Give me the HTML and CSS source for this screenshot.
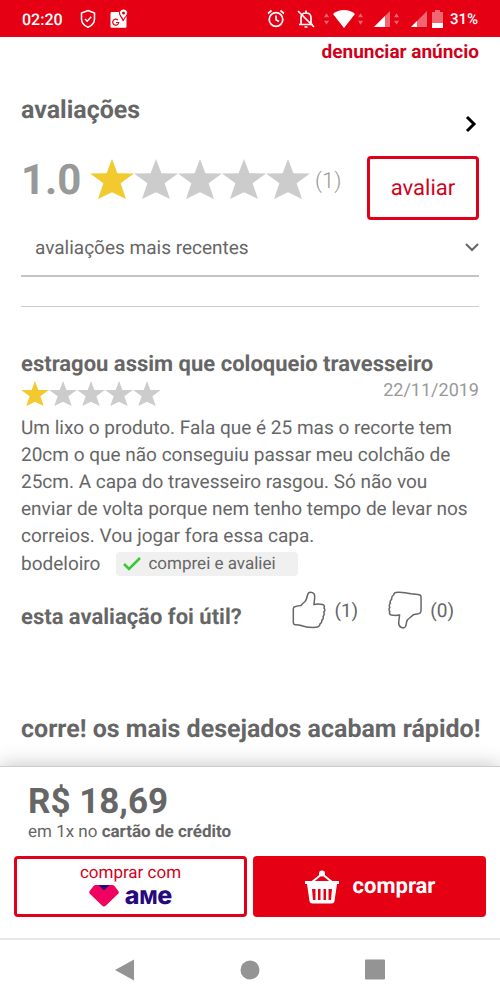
FILE: index.html
```html
<!DOCTYPE html>
<html lang="pt-BR">
<head>
<meta charset="utf-8">
<meta name="viewport" content="width=device-width, initial-scale=1">
<title>avaliações</title>
<link rel="stylesheet" href="styles.css">
</head>
<body>
<svg class="defs" aria-hidden="true">
  <symbol id="star" viewBox="0 0 44 40"><path d="M22 0l5.4 14.2L44 14.5 30.6 24.2 36 40 22 33.2 8 40l5.400-15.800L0 14.500l16.600-.300z"/></symbol>
  <symbol id="updown" viewBox="0 0 6 14"><path d="M3 0l3 5H0zM3 14l3-5H0z"/></symbol>
</svg>

<div class="status">
  <span class="clock">02:20</span>
  <svg class="shield" width="16" height="20" viewBox="0 0 16 20"><path d="M8 1.500l6.500 2.500v6c0 4-2.800 6.800-6.500 8.300C4.300 16.800 1.500 14 1.500 10V4z"/><path d="M5 10l2.200 2.200 4-4.400"/></svg>
  <svg class="maps" width="18" height="20" viewBox="0 0 18 20">
    <path d="M2 3h7c0 4 2.500 6 4 9.500 1-2.500 2-4 3.500-5.500v10.500c0 .8-.5 1.300-1.300 1.300H2C1 18.800.5 18.300.5 17.500v-13C.5 3.500 1 3 2 3z"/>
    <path class="pin" d="M13.500 0C11.300 0 9.500 1.800 9.500 3.800c0 3 3.100 4.200 4 7.700.9-3.500 4-4.700 4-7.700C17.500 1.800 15.700 0 13.500 0z"/><circle class="hole" cx="13.500" cy="4" r="1.500"/>
    <path class="g" d="M8 11.200a3 3 0 1 0 .7 2.300H6"/>
  </svg>
  <div class="status-right">
    <svg class="line-icon" width="18" height="20" viewBox="0 0 18 20"><circle cx="9" cy="10.500" r="6.800"/><path d="M9 6.500v4.300l3 1.800M1 4.500L4.500 1.500M17 4.500l-3.500-3"/></svg>
    <svg class="line-icon bell" width="20" height="20" viewBox="0 0 20 20"><path d="M5 15V9c0-3 2-5 5-5s5 2 5 5v6M3 15.500h14M10 4V1.500M8.500 18h3M2 2l16 16"/></svg>
    <svg class="faint" width="5" height="14"><use href="#updown"/></svg>
    <svg class="wifi" width="22" height="18" viewBox="0 0 22 18"><path d="M0 4C6-1.300 16-1.300 22 4L11 18z"/></svg>
    <svg class="faint" width="5" height="14"><use href="#updown"/></svg>
    <svg class="signal" width="16" height="16" viewBox="0 0 16 16"><path class="dim" d="M16 0v16H0z"/><path d="M11 5v11H0z"/></svg>
    <svg class="faint near" width="5" height="14"><use href="#updown"/></svg>
    <svg class="signal" width="16" height="16" viewBox="0 0 16 16"><path class="dim" d="M16 0v16H0z"/><path d="M6 10v6H0z"/></svg>
    <svg class="battery" width="11" height="18" viewBox="0 0 11 18"><path class="dim" d="M3 0h5v2h3v16H0V2h3z"/><path d="M0 13h11v5H0z"/></svg>
    <span class="percent">31%</span>
  </div>
</div>

<main class="content">
  <a class="report" href="#">denunciar anúncio</a>

  <section>
    <div class="heading">
      <h2>avaliações</h2>
      <a class="more" href="#" aria-label="ver avaliações"><svg width="12" height="18" viewBox="0 0 12 18"><path d="M2 2l7 7-7 7"/></svg></a>
    </div>
    <div class="summary">
      <span class="score">1.0</span>
      <div class="stars large" role="img" aria-label="1 de 5 estrelas">
        <svg class="on"><use href="#star"/></svg><svg><use href="#star"/></svg><svg><use href="#star"/></svg><svg><use href="#star"/></svg><svg><use href="#star"/></svg>
      </div>
      <span class="count">(1)</span>
      <button class="rate" type="button">avaliar</button>
    </div>
    <div class="sort">
      <select aria-label="ordenar avaliações"><option>avaliações mais recentes</option></select>
      <svg width="14" height="9" viewBox="0 0 14 9"><path d="M1 1l6 6 6-6"/></svg>
    </div>
  </section>

  <article class="review">
    <h3>estragou assim que coloqueio travesseiro</h3>
    <div class="meta">
      <div class="stars small" role="img" aria-label="1 de 5 estrelas">
        <svg class="on"><use href="#star"/></svg><svg><use href="#star"/></svg><svg><use href="#star"/></svg><svg><use href="#star"/></svg><svg><use href="#star"/></svg>
      </div>
      <time datetime="2019-11-22">22/11/2019</time>
    </div>
    <p class="text">Um lixo o produto. Fala que é 25 mas o recorte tem 20cm o que não conseguiu passar meu colchão de 25cm. A capa do travesseiro rasgou. Só não vou enviar de volta porque nem tenho tempo de levar nos correios. Vou jogar fora essa capa.</p>
    <div class="author">
      <span>bodeloiro</span>
      <span class="badge"><svg width="18" height="14" viewBox="0 0 18 14"><path d="M1 7l5 5L17 1"/></svg>comprei e avaliei</span>
    </div>
    <div class="useful">
      <h3>esta avaliação foi útil?</h3>
      <div class="votes">
        <button type="button" aria-label="útil (1)"><svg width="34" height="38" viewBox="0 0 34 38"><path d="M2 16c3-1 5-1.500 7-1.500 1-1.500 2.500-2.800 4-4 1.500-1.500 2-4 2.500-6.500C16 2 17 1.200 18.500 1.200c3 0 4.300 1.800 4.200 4.800 0 3-.7 5-.7 7.500 3-.8 6-.5 8.500 0 1.800.5 2.300 2 1.500 3.500 1 1.300 1 3-.3 4.200.8 1.500.5 3-.6 4.200.5 1.500 0 3-1.300 4 .2 1.500-.5 2.800-1.800 3.600-.3 2-1.500 3.200-4 3.300-5 .3-11-.3-15-1.800-2-.7-4-.7-6-.8-1-.2-1.700-1-1.700-2.200V18.500C1.300 17.300 1.500 16.500 2 16z"/></svg>(1)</button>
        <button type="button" aria-label="não útil (0)"><svg width="34" height="38" viewBox="0 0 34 38"><path d="M5.500 4C6 2 7 1.200 9 1.200c5-.3 10 .5 14 1.500 3 .6 5.500.6 8 1 1.400.2 2 1 2 2.300 0 5 .3 10-.1 14.500-.1 1.500-1 2-2.500 2.300-2 .3-4 .7-5.500 1.200-1.500 2-4 3-5.500 5-1.300 2-.8 4.500-1.900 6.500-.8 1.400-2.500 1.600-4 1-2-.7-2.800-2-2.800-4.500 0-2.800.7-5 .8-8-3 .7-6 .5-8.200 0C1.500 23.500 1 22 1.800 20.500.8 19.300.8 17.800 1.800 16.500 1 15 1.200 13.500 2.300 12.300 1.800 10.800 2.300 9.300 3.600 8.300 3.500 6.500 4 5 5.500 4z"/></svg>(0)</button>
      </div>
    </div>
  </article>

  <h2 class="wanted">corre! os mais desejados acabam rápido!</h2>
</main>

<footer class="buy">
  <div class="price">R$ 18,69</div>
  <div class="terms">em 1x no <b>cartão de crédito</b></div>
  <div class="actions">
    <button class="ame" type="button">
      <span>comprar com</span>
      <span class="brand">
        <svg width="30" height="22" viewBox="0 0 30 22"><path class="pink" d="M7 0h16c1 0 2 .4 2.700 1.200l3.600 4.800c.8 1 .7 2-.1 2.800L17 20.500c-1.300 1.300-2.700 1.300-4 0L.8 8.800C0 8 0 7 .7 6l3.600-4.800C5 .4 6 0 7 0z"/><path class="navy" d="M9.500 0h11L16 4.500c-.7.600-1.300.600-2 0z"/></svg>
        <span class="wordmark">a<span class="mid">M</span>e</span>
      </span>
    </button>
    <button class="cart" type="button">
      <svg width="36" height="34" viewBox="0 0 36 34"><path class="handle" d="M8 12L18 4l10 8"/><circle cx="18" cy="3.500" r="3"/><path fill-rule="evenodd" d="M1 11h34v3h-2l-2.500 17c-.3 1.700-1.200 2.500-3 2.500h-19c-1.800 0-2.700-.8-3-2.500L3 14H1zM8 19l1 11h2.500V19zM14 19v11h2.500V19zM19.500 19v11H22V19zM24.500 19v11H27l1-11z"/></svg>
      comprar
    </button>
  </div>
</footer>

<nav class="system">
  <button type="button" aria-label="voltar"><svg width="22" height="24" viewBox="0 0 22 24"><path d="M20 1.500v21L1 12z"/></svg></button>
  <button type="button" aria-label="início"><svg width="22" height="24" viewBox="0 0 22 24"><circle cx="11" cy="12" r="9.500"/></svg></button>
  <button type="button" aria-label="recentes"><svg width="22" height="24" viewBox="0 0 22 24"><rect x="1" y="1.500" width="20" height="20" rx="1"/></svg></button>
</nav>
</body>
</html>
```
FILE: styles.css
```css
* { box-sizing: border-box; }
body {
  margin: 0;
  min-height: 100vh;
  display: flex;
  flex-direction: column;
  background: #fff;
  color: #666;
  font-family: Roboto, "Liberation Sans", sans-serif;
  font-size: 19px;
  line-height: 27px;
  text-rendering: geometricPrecision;
}
button, select { font: inherit; color: inherit; background: none; border: 0; padding: 0; margin: 0; text-rendering: inherit; }
a { text-decoration: none; }
h2, h3, p { margin: 0; }
svg { display: block; flex: none; }
.defs { position: absolute; width: 0; height: 0; }

.status {
  display: flex;
  align-items: center;
  height: 37px;
  padding: 0 22px;
  background: #e60014;
  color: #fff;
  fill: #fff;
  font-size: 16px;
  font-weight: 500;
}
.clock, .percent { padding-top: 2px; }
.shield { margin-left: 17px; fill: none; stroke: #fff; stroke-width: 1.5; }
.maps { margin-left: 14px; }
.maps .pin { stroke: #e60014; stroke-width: 1; }
.maps .hole { fill: #e60014; }
.maps .g { fill: none; stroke: #e60014; stroke-width: 1.2; }
.status-right { display: flex; align-items: center; margin-left: auto; }
.line-icon { fill: none; stroke: #fff; stroke-width: 1.700; }
.bell { margin: 0 8px 0 11px; }
.faint { opacity: .4; }
.wifi { margin: 0 3px 0 4px; }
.signal { margin-left: 11px; }
.near { margin: 0 1px 0 4px; }
.dim { opacity: .4; }
.battery { margin: 0 7px 0 5px; }
.percent { font-size: 15px; }

.content { flex: 1; padding: 1px 21px 0; }
.report {
  display: block;
  text-align: right;
  color: #d0021b;
  font-weight: 700;
}
.heading {
  display: flex;
  justify-content: space-between;
  padding-top: 32px;
  height: 82px;
}
h2 { font-size: 25px; line-height: 28px; font-weight: 700; }
.more { align-self: flex-end; padding: 0 2px 14px; }
.more svg { fill: none; stroke: #000; stroke-width: 3; }
.summary { display: flex; align-items: center; padding-top: 9px; }
.score { width: 69px; color: #999; font-size: 42px; line-height: 48px; font-weight: 700; }
.stars { display: flex; fill: #ccc; }
.stars .on { fill: #f2c92e; }
.large { margin-bottom: 18px; }
.large svg { width: 44px; height: 40px; }
.score, .count { margin-bottom: 14px; }
.count { margin-left: 5px; color: #999; font-size: 22px; font-weight: 300; }
.rate {
  width: 112px;
  height: 64px;
  margin-left: auto;
  border: 3px solid #e0001a;
  border-radius: 4px;
  color: #d0021b;
  font-size: 22px;
}
.sort {
  display: flex;
  align-items: center;
  height: 57px;
  border-bottom: 2px solid #c4c4c4;
}
.sort select { flex: 1; padding-left: 14px; appearance: none; }
.sort svg { fill: none; stroke: #666; stroke-width: 2; }

.review { margin-top: 29px; padding-top: 44px; border-top: 1px solid #ccc; }
h3 { font-size: 22px; line-height: 28px; font-weight: 700; }
.meta { display: flex; justify-content: space-between; height: 35px; }
.small { padding-top: 2px; }
.small svg { width: 28px; height: 25px; }
time { color: #999; font-size: 18px; line-height: 24px; }
.author { display: flex; align-items: center; gap: 16px; margin-top: 1px; }
.badge {
  display: flex;
  align-items: center;
  gap: 7px;
  padding: 0 22px 0 7px;
  border-radius: 4px;
  background: #f0f0f0;
  font-size: 17px;
  line-height: 24px;
}
.badge svg { fill: none; stroke: #3c3; stroke-width: 2.500; }
.useful { display: flex; align-items: center; justify-content: space-between; margin-top: 13px; height: 50px; }
.useful h3 { padding-top: 6px; }
.votes { display: flex; gap: 30px; padding: 0 25px 10px 0; }
.votes button { display: flex; align-items: center; gap: 8px; }
.votes svg { fill: none; stroke: #666; stroke-width: 1.500; }
.wanted { margin: 76px 0 12px; white-space: nowrap; }

.buy {
  padding: 15px 14px 21px;
  background: #fff;
  border-top: 1px solid #ccc;
  border-bottom: 2px solid #e8e8e8;
  box-shadow: 0 0 20px rgba(0, 0, 0, .25);
}
.price { padding-left: 14px; font-size: 35px; line-height: 40px; font-weight: 700; }
.terms { padding-left: 14px; font-size: 17px; line-height: 20px; }
.actions { display: grid; grid-template-columns: 1fr 1fr; gap: 6px; margin-top: 14px; }
.actions button { height: 61px; border-radius: 4px; }
.ame {
  display: flex;
  flex-direction: column;
  align-items: center;
  padding-top: 3px;
  border: 3px solid #e0001a;
  color: #d0021b;
  font-size: 17px;
  line-height: 23px;
}
.brand { display: flex; align-items: center; gap: 6px; }
.wordmark { color: #26087f; font-family: Inter, sans-serif; font-size: 25px; font-weight: 800; line-height: 22px; }
.wordmark .mid { font-size: 19px; line-height: 19px; }
.pink { fill: #f0005f; }
.navy { fill: #26087f; }
.cart {
  display: flex;
  align-items: center;
  justify-content: center;
  gap: 13px;
  background: #e60014;
  color: #fff;
  font-size: 22px;
  font-weight: 700;
}
.cart svg { fill: #fff; }
.handle { fill: none; stroke: #fff; stroke-width: 2; }

.system {
  display: grid;
  grid-template-columns: repeat(3, 1fr);
  place-items: center;
  height: 60px;
  padding: 0 62px;
  background: #fff;
  fill: #949494;
}
```
